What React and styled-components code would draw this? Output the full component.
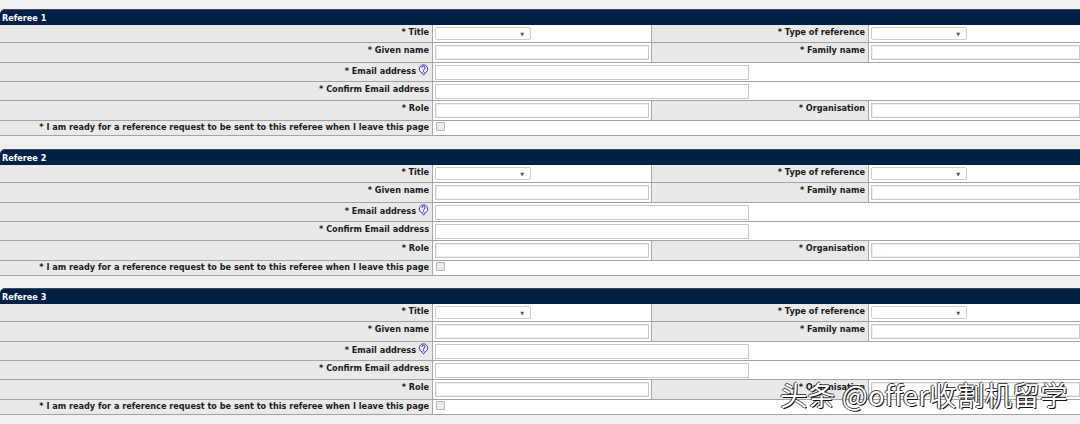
import React from 'react';
import styled, { createGlobalStyle } from 'styled-components';

const GlobalStyle = createGlobalStyle`
  html, body {
    margin: 0;
    padding: 0;
    background: #f1f1f1;
  }
`;

const Page = styled.div`
  position: relative;
  width: 1080px;
  height: 424px;
  overflow: hidden;
  padding-top: 9px;
  box-sizing: border-box;
  font-family: "DejaVu Sans", Verdana, sans-serif;
  font-size: 8.15px;
  font-weight: 700;
  color: #1a1a1a;
`;

const Section = styled.section`
  margin-bottom: 12px;

  &:first-child {
    margin-bottom: 13px;
  }
`;

const SectionHeader = styled.h2`
  margin: 0;
  height: 16px;
  line-height: 16px;
  padding-left: 2px;
  background: #002147;
  border-top: 1px solid #3a4a5c;
  box-sizing: border-box;
  border-top-left-radius: 5px;
  color: #fff;
  font-size: 8.15px;
  font-weight: 700;
`;

const Row = styled.div`
  display: grid;
  grid-template-columns: 433px 218px 218px 1fr;
  height: ${(p) => p.$height}px;
  box-sizing: border-box;
  border-bottom: 1px solid #a3a3a3;
`;

const Label = styled.div`
  display: flex;
  justify-content: flex-end;
  align-items: flex-start;
  gap: 2px;
  padding-right: 3px;
  line-height: ${(p) => p.$line || 15}px;
  background: #e9e9e9;
  border-right: 1px solid #a8a8a8;
  border-left: ${(p) => (p.$second ? '1px solid #a8a8a8' : '0')};
  white-space: nowrap;
`;

const Value = styled.div`
  display: flex;
  align-items: center;
  padding-left: 2px;
  background: #fff;
  grid-column: ${(p) => (p.$wide ? 'span 3' : 'auto')};
  min-width: 0;
`;

const TextInput = styled.input`
  width: ${(p) => p.$width}px;
  height: 15px;
  box-sizing: border-box;
  padding: 0;
  background: #fff;
  border: 1px solid #c9c9c9;
  box-shadow: ${(p) => (p.$soft ? 'inset 0 1px 0 #eee, inset 1px 0 0 #eee, inset 0 -1px 0 #eee' : 'none')};
  outline: none;
`;

const Picker = styled.div`
  display: flex;
  align-items: center;
  justify-content: flex-end;
  width: 96px;
  height: 13px;
  box-sizing: border-box;
  padding-right: 6px;
  background: #fff;
  border: 1px solid #cdcdcd;
  border-radius: 2px;
  font-size: 5px;
  font-weight: 400;
  color: #555;
`;

const Check = styled.span`
  display: block;
  width: 7px;
  height: 7px;
  margin: 0 0 3px 1px;
  background: #ececec;
  border: 1px solid #b5b5b5;
  border-radius: 1px;
`;

const HelpIcon = styled.svg`
  width: 11px;
  height: 12px;
  margin-top: 1px;
  flex: none;
`;

const Watermark = styled.div`
  position: absolute;
  left: 780px;
  top: 376px;
  font-family: "Noto Sans CJK SC", "Liberation Sans", sans-serif;
  font-size: 27.5px;
  font-weight: 400;
  line-height: 36px;
  letter-spacing: 0.2px;
  color: #fff;
  white-space: nowrap;
  text-shadow: 1px 1px 0 #111, -1px 0 0 #333, 0 -1px 0 #444;
`;

const Help = () => (
  <HelpIcon viewBox="0 0 11 12">
    <circle cx="5.5" cy="5" r="4.2" fill="#eef0ff" stroke="#2a2aa0" strokeWidth="0.9" />
    <path d="M4 8.8 5.6 11.2 7 8.8" fill="#eef0ff" stroke="#2a2aa0" strokeWidth="0.8" />
    <path d="M3.9 3.8a1.6 1.6 0 1 1 2.4 1.4c-.6.3-.8.5-.8 1" fill="none" stroke="#16168c" strokeWidth="1" />
    <rect x="5" y="6.7" width="1" height="1" fill="#16168c" />
  </HelpIcon>
);

const referees = [1, 2, 3];

function Referee({ n }) {
  return (
    <Section>
      <SectionHeader>Referee {n}</SectionHeader>
      <Row $height={18}>
        <Label>* Title</Label>
        <Value><Picker>▼</Picker></Value>
        <Label $second>* Type of reference</Label>
        <Value><Picker>▼</Picker></Value>
      </Row>
      <Row $height={20}>
        <Label>* Given name</Label>
        <Value><TextInput $width={214} $soft /></Value>
        <Label $second>* Family name</Label>
        <Value><TextInput $width={214} $soft /></Value>
      </Row>
      <Row $height={19}>
        <Label $line={17}>* Email address <Help /></Label>
        <Value $wide><TextInput $width={314} /></Value>
      </Row>
      <Row $height={19}>
        <Label>* Confirm Email address</Label>
        <Value $wide><TextInput $width={314} /></Value>
      </Row>
      <Row $height={20}>
        <Label>* Role</Label>
        <Value><TextInput $width={214} $soft /></Value>
        <Label $second>* Organisation</Label>
        <Value><TextInput $width={214} $soft /></Value>
      </Row>
      <Row $height={15}>
        <Label $line={12}>* I am ready for a reference request to be sent to this referee when I leave this page</Label>
        <Value $wide><Check /></Value>
      </Row>
    </Section>
  );
}

export default function App() {
  return (
    <>
      <GlobalStyle />
      <Page>
        {referees.map((n) => (
          <Referee key={n} n={n} />
        ))}
        <Watermark>头条 @offer收割机留学</Watermark>
      </Page>
    </>
  );
}
